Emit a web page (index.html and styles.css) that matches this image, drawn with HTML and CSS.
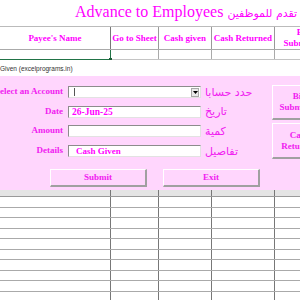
FILE: index.html
```html
<!DOCTYPE html>
<html lang="en">
<head>
    <meta charset="UTF-8">
    <meta name="viewport" content="width=device-width, initial-scale=1.0">
    <title>Advance to Employees</title>
    <link rel="stylesheet" href="styles.css">
</head>
<body>
    <div class="sheet">
        <div class="title-row">
            <h1 class="title">Advance to Employees <span class="ar">تقدم للموظفين</span></h1>
        </div>
        <div class="grid head">
            <div class="cell first-col">Payee's Name</div>
            <div class="cell">Go to Sheet</div>
            <div class="cell">Cash given</div>
            <div class="cell">Cash Returned</div>
            <div class="cell">Bill<br>Submitted</div>
        </div>
        <div class="grid row top-row">
            <div class="cell first-col active"><span class="handle"></span></div>
            <div class="cell"></div>
            <div class="cell"></div>
            <div class="cell"></div>
            <div class="cell"></div>
        </div>
    </div>

    <div class="form">
        <div class="form-title">Cash Given (excelprograms.in)</div>
        <div class="form-body">
            <div class="fields">
                <div class="field">
                    <label>Select an Account</label>
                    <div class="input combo">
                        <span class="caret"></span>
                        <span class="drop">
                            <svg width="5" height="3" viewBox="0 0 5 3"><path d="M0 0h5L2.5 3z" fill="#000"/></svg>
                        </span>
                    </div>
                    <span class="ar-label" dir="rtl">حدد حسابا</span>
                </div>
                <div class="field">
                    <label>Date</label>
                    <div class="input">26-Jun-25</div>
                    <span class="ar-label" dir="rtl">تاريخ</span>
                </div>
                <div class="field">
                    <label>Amount</label>
                    <div class="input"></div>
                    <span class="ar-label" dir="rtl">كمية</span>
                </div>
                <div class="field">
                    <label>Details</label>
                    <div class="input value-pad">Cash Given</div>
                    <span class="ar-label" dir="rtl">تفاصيل</span>
                </div>
                <div class="actions">
                    <button type="button" class="btn">Submit</button>
                    <button type="button" class="btn">Exit</button>
                </div>
            </div>
            <div class="side">
                <button type="button" class="btn side-btn">Bill<br>Submitted</button>
                <button type="button" class="btn side-btn tall">Cash<br>Returned</button>
            </div>
        </div>
    </div>

    <div class="sheet">
        <div class="grid row band">
            <div class="cell first-col"></div><div class="cell"></div><div class="cell"></div><div class="cell"></div><div class="cell"></div>
        </div>
        <div class="grid row"><div class="cell first-col"></div><div class="cell"></div><div class="cell"></div><div class="cell"></div><div class="cell"></div></div>
        <div class="grid row"><div class="cell first-col"></div><div class="cell"></div><div class="cell"></div><div class="cell"></div><div class="cell"></div></div>
        <div class="grid row"><div class="cell first-col"></div><div class="cell"></div><div class="cell"></div><div class="cell"></div><div class="cell"></div></div>
        <div class="grid row"><div class="cell first-col"></div><div class="cell"></div><div class="cell"></div><div class="cell"></div><div class="cell"></div></div>
        <div class="grid row"><div class="cell first-col"></div><div class="cell"></div><div class="cell"></div><div class="cell"></div><div class="cell"></div></div>
        <div class="grid row"><div class="cell first-col"></div><div class="cell"></div><div class="cell"></div><div class="cell"></div><div class="cell"></div></div>
        <div class="grid row"><div class="cell first-col"></div><div class="cell"></div><div class="cell"></div><div class="cell"></div><div class="cell"></div></div>
        <div class="grid row"><div class="cell first-col"></div><div class="cell"></div><div class="cell"></div><div class="cell"></div><div class="cell"></div></div>
        <div class="grid row"><div class="cell first-col"></div><div class="cell"></div><div class="cell"></div><div class="cell"></div><div class="cell"></div></div>
        <div class="grid row"><div class="cell first-col"></div><div class="cell"></div><div class="cell"></div><div class="cell"></div><div class="cell"></div></div>
    </div>
</body>
</html>
```

FILE: styles.css
```css
body {
    margin: 0;
    width: 300px;
    height: 300px;
    overflow: hidden;
    background-color: #fff;
    font-family: "Liberation Serif", serif;
}
.sheet {
    width: 300px;
    overflow: hidden;
}
.title-row {
    height: 26px;
    padding-left: 75px;
    box-sizing: border-box;
}
.title {
    margin: 0;
    font-size: 16px;
    font-weight: normal;
    line-height: 24px;
    color: #ff00ff;
    white-space: nowrap;
}
.title .ar {
    font-family: "DejaVu Sans", sans-serif;
    font-size: 11px;
}
.grid {
    display: grid;
    grid-template-columns: 111px 48px 53px 63px 58px;
    width: 333px;
}
.cell {
    box-sizing: border-box;
    border-right: 1px solid #999;
}
.cell.first-col {
    border-right-color: #777;
}
.head {
    height: 24px;
    border-top: 1px solid #bbb;
    border-bottom: 1px solid #aaa;
    box-sizing: border-box;
}
.head .cell {
    display: flex;
    align-items: center;
    justify-content: center;
    text-align: center;
    font-size: 9px;
    font-weight: bold;
    line-height: 11px;
    color: #ff00ff;
    white-space: nowrap;
}
.row {
    height: 10.5px;
    box-sizing: border-box;
    border-bottom: 1px solid #aaa;
}
.row .cell {
    border-right-color: #777;
}
.top-row {
    height: 10px;
    border-bottom-color: #c4c4c4;
}
.top-row .cell {
    border-right-color: #aaa;
}
.top-row .active {
    position: relative;
    border-right: 1px solid #217346;
    box-shadow: 0 1px 0 #217346;
}
.handle {
    position: absolute;
    right: -2px;
    bottom: -2px;
    width: 3px;
    height: 3px;
    background-color: #1d5e38;
}
.band {
    height: 7px;
    background-color: #e4e4e4;
    border-bottom-color: #999;
}
.form {
    margin-left: -30px;
    width: 360px;
}
.form-title {
    height: 16px;
    padding-left: 13px;
    background-color: #fff;
    font-family: "Liberation Sans", sans-serif;
    font-size: 6.5px;
    line-height: 18px;
    color: #333;
    white-space: nowrap;
}
.form-body {
    display: flex;
    height: 114px;
    background-color: #ffd6fd;
}
.fields {
    width: 302px;
    padding-top: 10px;
    display: flex;
    flex-direction: column;
    gap: 7.7px;
}
.field {
    display: flex;
    align-items: center;
    height: 12px;
}
.field label {
    width: 98px;
    padding-right: 5px;
    box-sizing: border-box;
    margin-top: -2px;
    text-align: right;
    font-size: 9px;
    font-weight: bold;
    color: #f020f0;
    white-space: nowrap;
}
.input {
    width: 133px;
    height: 12px;
    box-sizing: border-box;
    padding-left: 3px;
    background-color: #fff;
    border-top: 1px solid #8c8c8c;
    border-left: 1px solid #8c8c8c;
    border-right: 1px solid #e2e2e2;
    border-bottom: 1px solid #e2e2e2;
    font-size: 9.5px;
    font-weight: bold;
    line-height: 11px;
    color: #ff00ff;
    white-space: nowrap;
}
.value-pad {
    padding-left: 7px;
    font-size: 9px;
}
.combo {
    display: flex;
    align-items: center;
    justify-content: space-between;
    padding-left: 5px;
    padding-right: 1px;
}
.caret {
    width: 1px;
    height: 8px;
    background-color: #555;
}
.drop {
    display: flex;
    align-items: center;
    justify-content: center;
    width: 8px;
    height: 9px;
    box-sizing: border-box;
    background-color: #e9e9e9;
    border: 1px solid #a8a8a8;
}
.ar-label {
    margin-left: 4px;
    font-family: "DejaVu Sans", sans-serif;
    font-size: 11px;
    color: #f020f0;
    white-space: nowrap;
}
.actions {
    display: flex;
    gap: 16px;
    margin-top: 4px;
    padding-left: 80px;
}
.btn {
    width: 97px;
    height: 18px;
    padding: 0;
    box-sizing: border-box;
    background-color: #ffd6fd;
    border-top: 1px solid #fff;
    border-left: 1px solid #fff;
    border-right: 2px solid #a0a0a0;
    border-bottom: 2px solid #a0a0a0;
    font-family: "Liberation Serif", serif;
    font-size: 9px;
    font-weight: bold;
    line-height: 11px;
    color: #f020f0;
}
.side {
    display: flex;
    flex-direction: column;
    gap: 3px;
    padding-top: 9px;
}
.side-btn {
    width: 56px;
    height: 35px;
}
.side-btn.tall {
    height: 36px;
}
```
